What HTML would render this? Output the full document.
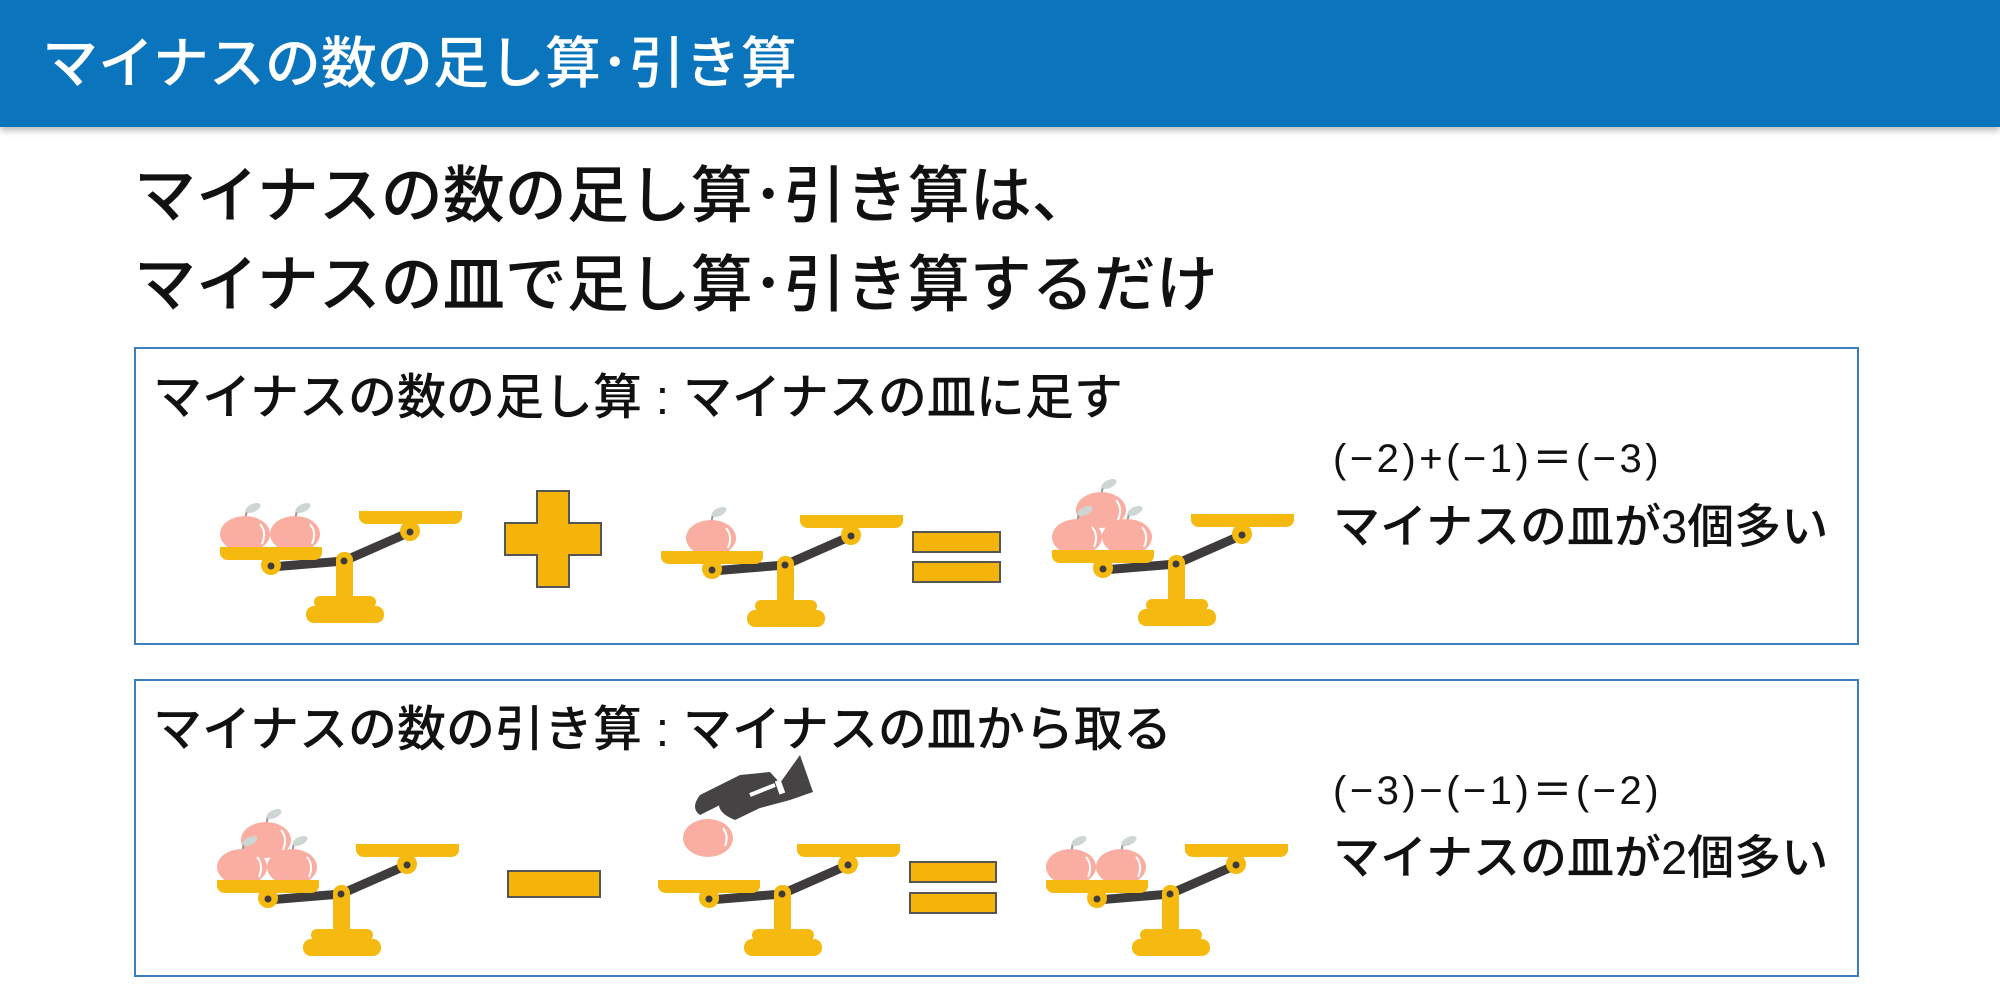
<!DOCTYPE html>
<html><head><meta charset="utf-8"><style>
body{margin:0;width:2000px;height:1000px;background:#fff;position:relative;overflow:hidden;font-family:"Liberation Sans","Noto Sans CJK JP",sans-serif;color:#111}
.hdr{position:absolute;left:0;top:0;width:2000px;height:127px;background:#0a74bc;box-shadow:0 4px 6px rgba(0,0,0,.25)}
.hdr span{position:absolute;left:42px;top:36px;font-size:56px;color:#fff;line-height:1;font-weight:500}
.t{position:absolute;white-space:nowrap;line-height:1;font-weight:500}
.box{position:absolute;left:134px;width:1725px;border:2px solid #3a7fc0;box-sizing:border-box}
svg{position:absolute;left:0;top:0}
</style></head><body>
<div class="hdr"><span>マイナスの数の足し算･引き算</span></div>
<div class="t" style="left:134px;top:166px;font-size:62px">マイナスの数の足し算･引き算は、</div>
<div class="t" style="left:134px;top:255px;font-size:62px">マイナスの皿で足し算･引き算するだけ</div>
<div class="box" style="top:347px;height:298px"></div>
<div class="box" style="top:679px;height:298px"></div>
<div class="t" style="left:153px;top:374px;font-size:49px">マイナスの数の足し算 : マイナスの皿に足す</div>
<div class="t" style="left:1333px;top:439px;font-size:40px;letter-spacing:3.5px">(−2)+(−1)＝(−3)</div>
<div class="t" style="left:1333px;top:503px;font-size:47px">マイナスの皿が3個多い</div>
<div class="t" style="left:153px;top:706px;font-size:49px">マイナスの数の引き算 : マイナスの皿から取る</div>
<div class="t" style="left:1333px;top:771px;font-size:40px;letter-spacing:3.5px">(−3)−(−1)＝(−2)</div>
<div class="t" style="left:1333px;top:834px;font-size:47px">マイナスの皿が2個多い</div>
<svg width="2000" height="1000" viewBox="0 0 2000 1000">
<defs>
<g id="sc">
<path d="M51 57 L124 51 L190 22" fill="none" stroke="#3d3b3c" stroke-width="9" stroke-linejoin="round"/>
<rect x="116" y="42" width="17" height="50" rx="8" fill="#f5b90f"/>
<rect x="94" y="86" width="62" height="12" rx="6" fill="#f5b90f"/>
<rect x="86" y="96" width="78" height="17" rx="8" fill="#f5b90f"/>
<path d="M0 37 H102 V44 Q100 50 94 50 H8 Q2 50 0 44Z" fill="#f5b90f"/>
<circle cx="51" cy="55" r="10" fill="#f5b90f"/>
<path d="M139 1 H242 V8 Q240 14 234 14 H147 Q141 14 139 8Z" fill="#f5b90f"/>
<circle cx="190" cy="21" r="10" fill="#f5b90f"/>
<circle cx="51" cy="56" r="3.5" fill="#3d3b3c"/><circle cx="124" cy="51" r="3.5" fill="#3d3b3c"/><circle cx="190" cy="22" r="3.5" fill="#3d3b3c"/>
</g>
<g id="ap">
<path d="M25 8 L27 -2" stroke="#999" stroke-width="2"/>
<ellipse cx="33" cy="-4" rx="8" ry="4" fill="#cdd6d3" transform="rotate(-25 33 -4)"/>
<ellipse cx="25" cy="22" rx="25" ry="18" fill="#f9aea1"/>
<path d="M40 12 Q47 20 42 32" stroke="#fff" stroke-width="2" fill="none"/>
</g>
</defs>
<g transform="translate(220,510)"><use href="#ap" x="0" y="2"/><use href="#ap" x="50" y="2"/><use href="#sc"/></g>
<path d="M537 491 H569 V523 H601 V555 H569 V587 H537 V555 H505 V523 H537Z" fill="#f5b40a" stroke="#555" stroke-width="2"/>
<g transform="translate(661,514)"><use href="#ap" x="25" y="2"/><use href="#sc"/></g>
<rect x="913" y="532" width="87" height="20" fill="#f5b40a" stroke="#555" stroke-width="2"/>
<rect x="913" y="562" width="87" height="20" fill="#f5b40a" stroke="#555" stroke-width="2"/>
<g transform="translate(1052,513)"><use href="#ap" x="24" y="-25"/><use href="#ap" x="0" y="2"/><use href="#ap" x="50" y="2"/><use href="#sc"/></g>
<g transform="translate(217,843)"><use href="#ap" x="24" y="-25"/><use href="#ap" x="0" y="2"/><use href="#ap" x="50" y="2"/><use href="#sc"/></g>
<rect x="508" y="871" width="92" height="26" fill="#f5b40a" stroke="#555" stroke-width="2"/>
<g transform="translate(658,843)"><use href="#sc"/></g>
<ellipse cx="708" cy="838" rx="25" ry="19" fill="#f9aea1"/>
<path d="M723 828 Q729 836 725 846" stroke="#fff" stroke-width="2" fill="none"/>
<path d="M780 783 L800 755 L813 792 L790 800 L760 808 L735 820 Q715 812 720 800 L745 790 L730 800 L700 815 Q690 808 700 795 L740 775 L770 772Z" fill="#454344"/>
<path d="M750 795 L775 785" stroke="#fff" stroke-width="4"/>
<rect x="777" y="780" width="6" height="14" fill="#fff" transform="rotate(-20 780 787)"/>
<rect x="910" y="862" width="86" height="20" fill="#f5b40a" stroke="#555" stroke-width="2"/>
<rect x="910" y="893" width="86" height="20" fill="#f5b40a" stroke="#555" stroke-width="2"/>
<g transform="translate(1046,843)"><use href="#ap" x="0" y="2"/><use href="#ap" x="50" y="2"/><use href="#sc"/></g>
</svg>
</body></html>
